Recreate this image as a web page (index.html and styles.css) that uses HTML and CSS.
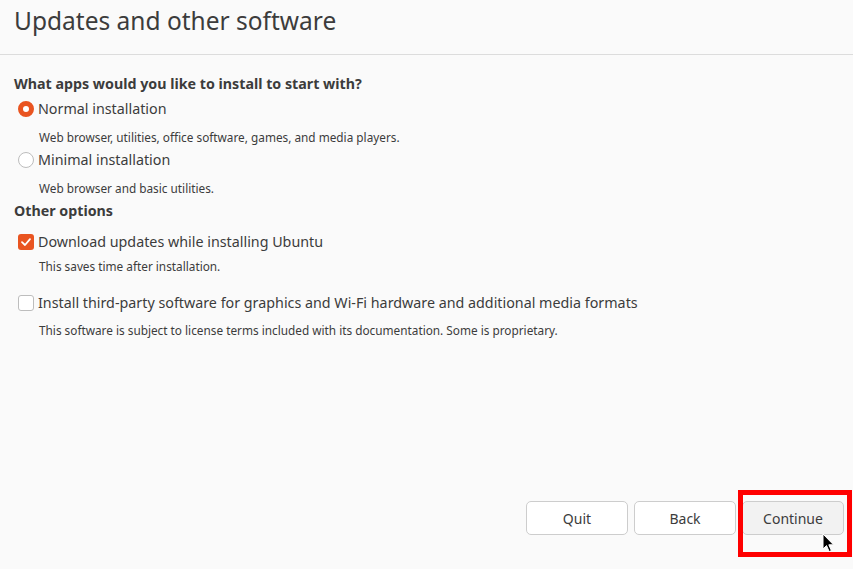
FILE: index.html
```html
<!DOCTYPE html>
<html lang="en">
<head>
<meta charset="utf-8">
<title>Updates and other software</title>
<link rel="stylesheet" href="styles.css">
</head>
<body>
<div class="page">
  <header class="header">
    <h1 class="title">Updates and other software</h1>
  </header>
  <main class="content">
    <h2 class="heading heading-first">What apps would you like to install to start with?</h2>
    <div class="row row-r1">
      <span class="radio radio-on"></span>
      <span class="label">Normal installation</span>
    </div>
    <p class="desc desc-r1">Web browser, utilities, office software, games, and media players.</p>
    <div class="row row-r2">
      <span class="radio"></span>
      <span class="label">Minimal installation</span>
    </div>
    <p class="desc desc-r2">Web browser and basic utilities.</p>
    <h2 class="heading heading-other">Other options</h2>
    <div class="row row-c1">
      <span class="check check-on">
        <svg viewBox="0 0 16 16" width="16" height="16"><path d="M4 8.2 L7 11 L12 5.2" fill="none" stroke="#fff" stroke-width="1.8" stroke-linecap="round" stroke-linejoin="round"/></svg>
      </span>
      <span class="label">Download updates while installing Ubuntu</span>
    </div>
    <p class="desc desc-c1">This saves time after installation.</p>
    <div class="row row-c2">
      <span class="check"></span>
      <span class="label">Install third-party software for graphics and Wi-Fi hardware and additional media formats</span>
    </div>
    <p class="desc desc-c2">This software is subject to license terms included with its documentation. Some is proprietary.</p>
  </main>
  <footer class="footer">
    <button class="btn">Quit</button>
    <button class="btn">Back</button>
    <button class="btn btn-hover">Continue</button>
  </footer>
  <div class="highlight"></div>
  <svg class="cursor" width="14" height="21" viewBox="0 0 14 21"><path d="M1 1 L1 16 L4.5 12.6 L7.2 18.6 L9.4 17.6 L6.8 11.8 L11.5 11.8 Z" fill="#000" stroke="#fff" stroke-width="1" stroke-linejoin="round"/></svg>
</div>
</body>
</html>
```
FILE: styles.css
```css
* { box-sizing: border-box; }
html, body { margin: 0; padding: 0; }
body {
  background: #fafafa;
  font-family: "Noto Sans", "DejaVu Sans", sans-serif;
  color: #3c3c3c;
}
.page {
  position: relative;
  width: 853px;
  height: 569px;
  display: flex;
  flex-direction: column;
  overflow: hidden;
}
.header {
  height: 55px;
  border-bottom: 1px solid #dcdcdc;
  padding: 4px 0 0 14px;
}
.title {
  margin: 0;
  font-size: 24.5px;
  font-weight: 400;
  line-height: 34px;
  color: #3c3c3c;
}
.content {
  flex: 1;
  display: flex;
  flex-direction: column;
  padding-left: 14px;
}
.heading {
  margin: 0;
  font-size: 14.25px;
  font-weight: 700;
  line-height: 20px;
}
.heading-first { margin-top: 19px; }
.heading-other { margin-top: 4px; }
.row {
  display: flex;
  align-items: center;
  gap: 4px;
  height: 20px;
  padding-left: 4px;
  font-size: 14.3px;
}
.row-r1 { margin-top: 5px; }
.row-r2 { margin-top: 4px; }
.row-c1 { margin-top: 11px; }
.row-c2 { margin-top: 18px; }
.label { line-height: 20px; white-space: nowrap; }
.desc {
  margin: 0;
  padding-left: 25px;
  font-size: 11.8px;
  line-height: 18px;
}
.desc-r1 { margin-top: 9px; }
.desc-r2 { margin-top: 9px; }
.desc-c1 { margin-top: 5px; }
.desc-c2 { margin-top: 8px; }
.radio {
  width: 16px;
  height: 16px;
  border-radius: 50%;
  border: 1px solid #bdbdbd;
  background: #fff;
  flex: none;
}
.radio-on {
  border: 5px solid #e95420;
  background: #fff;
}
.check {
  width: 16px;
  height: 16px;
  border-radius: 3px;
  border: 1px solid #bdbdbd;
  background: #fff;
  flex: none;
  display: flex;
}
.check-on {
  border: none;
  background: #e95420;
}
.footer {
  display: flex;
  justify-content: flex-end;
  gap: 6px;
  padding: 0 9px 34px 0;
}
.btn {
  width: 102px;
  height: 34px;
  border: 1px solid #cdcdcd;
  border-radius: 5px;
  background: #fff;
  font-family: inherit;
  font-size: 14px;
  color: #3c3c3c;
}
.btn-hover { background: #f2f2f2; }
.highlight {
  position: absolute;
  left: 738px;
  top: 490px;
  width: 114px;
  height: 67px;
  border: 5px solid #ff0000;
}
.cursor {
  position: absolute;
  left: 822px;
  top: 533px;
}
```
